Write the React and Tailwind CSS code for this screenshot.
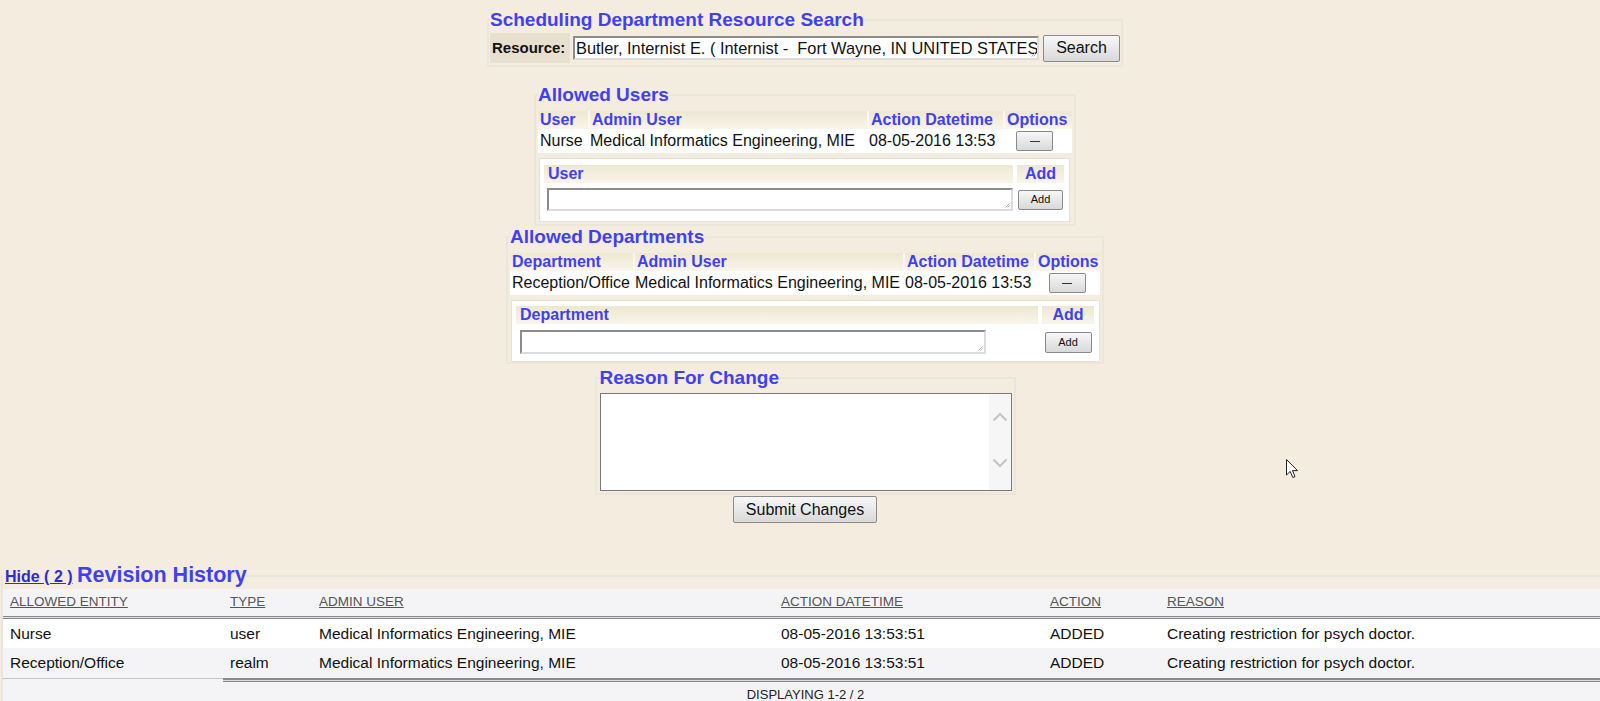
import React from "react";

const blue = "text-[#3f3ff7]";
const hdrCell =
  "bg-linear-to-b from-[#eee7d1] to-[#f9f5ea] border-l-2 border-[#fbf8f1] first:border-l-0 pl-[2px] h-[18px] leading-[18px] text-[16px] font-bold text-[#3f3ff7] whitespace-nowrap";
const btn =
  "bg-linear-to-b from-[#f7f7f7] to-[#d9d9d9] border border-[#8a8a8a] rounded-[2px] text-[#111] flex items-center justify-center";
const inputCls =
  "relative bg-white border-2 border-t-[#8c8c8c] border-l-[#8c8c8c] border-b-[#dcdcdc] border-r-[#dcdcdc]";

function Grip() {
  return (
    <svg className="absolute right-[1px] bottom-[1px]" width="5" height="5" viewBox="0 0 5 5">
      <path d="M4.5 0.5 L0.5 4.5 M4.5 2.5 L2.5 4.5" stroke="#b0b0b0" strokeWidth="1" fill="none" />
    </svg>
  );
}

function MinusBtn() {
  return (
    <button className={`${btn} w-[37px] h-[20px] text-[13px] leading-none`}>
      <span className="block w-[10px] h-[1px] bg-[#333]" />
    </button>
  );
}

function AddBtn({ w }) {
  return (
    <button className={`${btn} ${w} h-[20px] text-[11px]`}>Add</button>
  );
}

export default function App() {
  return (
    <div className="relative min-h-[701px] bg-[#f4ecde] font-['Liberation_Sans',Arial,sans-serif] text-[#111] overflow-hidden">
      <div className="flex flex-col items-center pl-[10px] pt-[9px]">
        {/* Resource search */}
        <fieldset className="border-2 border-[#ebe6da] px-[1px] pb-[2px]">
          <legend className={`text-[19px] leading-[22px] font-bold ${blue}`}>
            Scheduling Department Resource Search
          </legend>
          <div className="flex items-center mt-[2px]">
            <div className="h-[30px] w-[80px] bg-[#e7e0cf] flex items-center pl-[2px] text-[15px] font-bold">
              Resource:
            </div>
            <div className={`${inputCls} ml-[3px] h-[24px] w-[466px] overflow-hidden whitespace-nowrap text-[16.4px] leading-[20px] pl-[1px]`}>
              Butler, Internist E. ( Internist -&nbsp; Fort Wayne, IN UNITED STATES )
              <Grip />
            </div>
            <button className={`${btn} ml-[4px] h-[27px] w-[77px] text-[16px]`}>Search</button>
          </div>
        </fieldset>

        {/* Allowed Users */}
        <fieldset className="mt-[17px] border-2 border-[#ebe6da] px-[2px] pb-[2px]">
          <legend className={`text-[19px] leading-[22px] font-bold ${blue}`}>Allowed Users</legend>
          <div className="mt-[5px] grid grid-cols-[50px_279px_136px_69px]">
            <div className={hdrCell}>User</div>
            <div className={hdrCell}>Admin User</div>
            <div className={hdrCell}>Action Datetime</div>
            <div className={hdrCell}>Options</div>
            <div className="bg-white h-[24px] flex items-center pl-[2px] text-[16px] whitespace-nowrap">Nurse</div>
            <div className="bg-white h-[24px] flex items-center pl-[2px] text-[16px] whitespace-nowrap">Medical Informatics Engineering, MIE</div>
            <div className="bg-white h-[24px] flex items-center pl-[2px] text-[16px] whitespace-nowrap">08-05-2016 13:53</div>
            <div className="bg-white h-[24px] flex items-center justify-center pr-[6px]"><MinusBtn /></div>
          </div>
          <div className="mt-[5px] ml-[1px] w-[531px] bg-white border border-[#e6e1d4] pt-[6px] pb-[10px] pl-[4px]">
            <div className="flex gap-[4px]">
              <div className="w-[469px] bg-linear-to-b from-[#eee7d1] to-[#f9f5ea] h-[18px] leading-[18px] pl-[4px] text-[16px] font-bold text-[#3f3ff7]">User</div>
              <div className="w-[47px] bg-linear-to-b from-[#eee7d1] to-[#f9f5ea] h-[18px] leading-[18px] text-center text-[16px] font-bold text-[#3f3ff7]">Add</div>
            </div>
            <div className="flex gap-[4px] mt-[5px] items-center">
              <div className="w-[469px] pl-[3px]">
                <div className={`${inputCls} w-[466px] h-[23px]`}><Grip /></div>
              </div>
              <div className="w-[47px] flex justify-center"><AddBtn w="w-[45px]" /></div>
            </div>
          </div>
        </fieldset>

        {/* Allowed Departments */}
        <fieldset className="border-2 border-[#ebe6da] px-[2px] pb-0">
          <legend className={`text-[19px] leading-[22px] font-bold ${blue}`}>Allowed Departments</legend>
          <div className="mt-[5px] grid grid-cols-[123px_270px_131px_66px]">
            <div className={hdrCell}>Department</div>
            <div className={hdrCell}>Admin User</div>
            <div className={hdrCell}>Action Datetime</div>
            <div className={hdrCell}>Options</div>
            <div className="bg-white h-[24px] flex items-center pl-[2px] text-[16px] whitespace-nowrap">Reception/Office</div>
            <div className="bg-white h-[24px] flex items-center pl-[2px] text-[16px] whitespace-nowrap">Medical Informatics Engineering, MIE</div>
            <div className="bg-white h-[24px] flex items-center pl-[2px] text-[16px] whitespace-nowrap">08-05-2016 13:53</div>
            <div className="bg-white h-[24px] flex items-center justify-center"><MinusBtn /></div>
          </div>
          <div className="mt-[5px] ml-[1px] w-[589px] bg-white border border-[#e6e1d4] pt-[5px] pb-[7px] pl-[4px]">
            <div className="flex gap-[4px]">
              <div className="w-[522px] bg-linear-to-b from-[#eee7d1] to-[#f9f5ea] h-[18px] leading-[18px] pl-[4px] text-[16px] font-bold text-[#3f3ff7]">Department</div>
              <div className="w-[52px] bg-linear-to-b from-[#eee7d1] to-[#f9f5ea] h-[18px] leading-[18px] text-center text-[16px] font-bold text-[#3f3ff7]">Add</div>
            </div>
            <div className="flex gap-[4px] mt-[6px] items-center">
              <div className="w-[522px] pl-[4px]">
                <div className={`${inputCls} w-[466px] h-[24px]`}><Grip /></div>
              </div>
              <div className="w-[52px] flex justify-center"><button className={`${btn} w-[47px] h-[21px] text-[11px]`}>Add</button></div>
            </div>
          </div>
        </fieldset>

        {/* Reason For Change */}
        <fieldset className="mt-[3px] border-2 border-[#ebe6da] pl-[3px] pr-[2px] pb-[2px]">
          <legend className={`text-[19px] leading-[22px] font-bold ${blue}`}>Reason For Change</legend>
          <div className="mt-[4px] w-[412px] h-[98px] bg-white border border-[#7a7a7a] flex justify-end">
            <div className="w-[22px] h-full bg-[#f6f6f6] flex flex-col items-center justify-between pt-[18px] pb-[22px]">
              <svg width="16" height="10" viewBox="0 0 16 10">
                <polyline points="1.5,8.5 8,2 14.5,8.5" fill="none" stroke="#c4c4c4" strokeWidth="2" />
              </svg>
              <svg width="16" height="10" viewBox="0 0 16 10">
                <polyline points="1.5,1.5 8,8 14.5,1.5" fill="none" stroke="#c4c4c4" strokeWidth="2" />
              </svg>
            </div>
          </div>
        </fieldset>
        <button className={`${btn} mt-[1px] w-[144px] h-[27px] text-[16px]`}>Submit Changes</button>
      </div>

      {/* Revision History */}
      <fieldset className="mt-[40px] ml-[1px] border-2 border-r-0 border-b-0 border-[#ebe6da]">
        <legend className="pl-[2px] leading-[24px] whitespace-nowrap">
          <a className="text-[16px] font-bold text-[#2b2bd9] underline">Hide ( 2 )</a>{" "}
          <span className={`text-[21.5px] font-bold ${blue}`}>Revision History</span>
        </legend>
        <div className="bg-[#f4f4f6]">
          <div className="grid grid-cols-[220px_89px_462px_269px_117px_1fr] h-[27px] items-center text-[13.5px] text-[#555]">
            <div className="pl-[7px]"><span className="underline">ALLOWED ENTITY</span></div>
            <div className="pl-[7px]"><span className="underline">TYPE</span></div>
            <div className="pl-[7px]"><span className="underline">ADMIN USER</span></div>
            <div className="pl-[7px]"><span className="underline">ACTION DATETIME</span></div>
            <div className="pl-[7px]"><span className="underline">ACTION</span></div>
            <div className="pl-[7px]"><span className="underline">REASON</span></div>
          </div>
          <div className="h-[3px] border-t border-b border-[#8c8c8c] bg-[#dedede]" />
          <div className="grid grid-cols-[220px_89px_462px_269px_117px_1fr] h-[29px] items-center text-[15.5px] bg-white">
            <div className="pl-[7px]">Nurse</div>
            <div className="pl-[7px]">user</div>
            <div className="pl-[7px]">Medical Informatics Engineering, MIE</div>
            <div className="pl-[7px]">08-05-2016 13:53:51</div>
            <div className="pl-[7px]">ADDED</div>
            <div className="pl-[7px]">Creating restriction for psych doctor.</div>
          </div>
          <div className="grid grid-cols-[220px_89px_462px_269px_117px_1fr] h-[29px] items-center text-[15.5px] bg-[#f4f4f6]">
            <div className="pl-[7px]">Reception/Office</div>
            <div className="pl-[7px]">realm</div>
            <div className="pl-[7px]">Medical Informatics Engineering, MIE</div>
            <div className="pl-[7px]">08-05-2016 13:53:51</div>
            <div className="pl-[7px]">ADDED</div>
            <div className="pl-[7px]">Creating restriction for psych doctor.</div>
          </div>
          <div className="flex h-[5px] bg-[#f4f4f6]">
            <div className="w-[220px] mt-[1px] border-t border-[#c4c4c4]" />
            <div className="flex-1 border-t-2 border-b border-[#8a8a8a] bg-[#dcdcdc] h-[4px] mt-[1px]" />
          </div>
          <div className="h-[20px] border-b border-[#b8b8b8] text-center text-[13px] leading-[13px] pt-[6px] pl-[8px] text-[#222]">
            DISPLAYING 1-2 / 2
          </div>
        </div>
      </fieldset>

      {/* mouse cursor */}
      <svg className="absolute left-[1286px] top-[459px]" width="13" height="20" viewBox="0 0 13 20">
        <path d="M0.5 0.5 L0.5 16 L4.2 12.4 L6.8 18.5 L9 17.6 L6.5 11.6 L11.5 11.6 Z" fill="#fff" stroke="#222" strokeWidth="1" />
      </svg>
    </div>
  );
}
